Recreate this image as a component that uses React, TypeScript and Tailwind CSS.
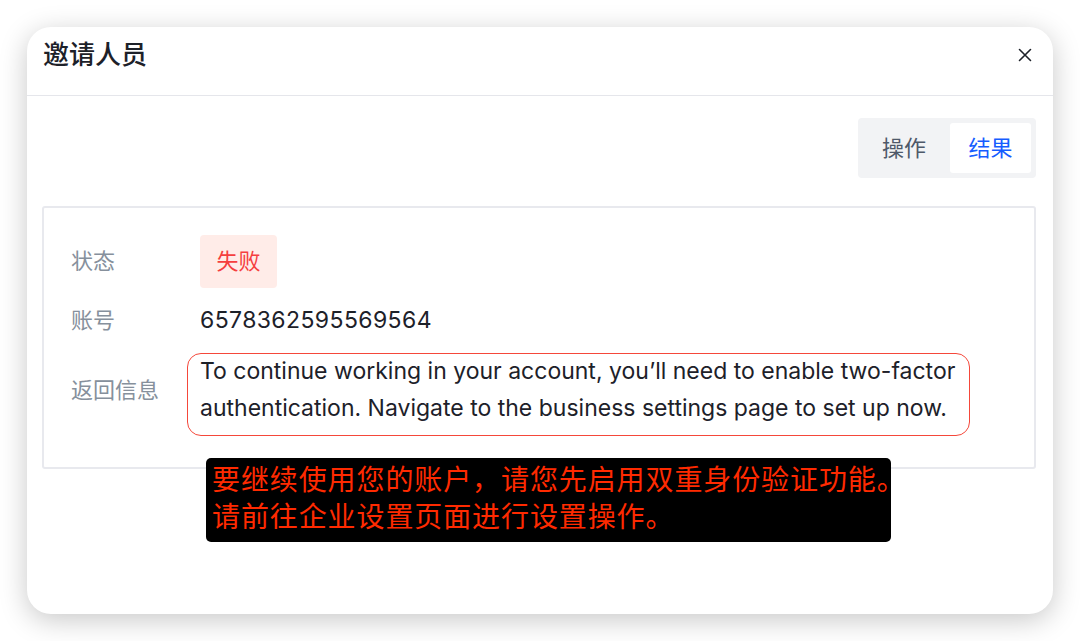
import React from 'react';

const App = () => {
  return (
    <div className="w-[1080px] h-[641px] bg-white p-[27px] font-['Inter','Noto_Sans_CJK_SC',sans-serif]">
      <div className="relative h-[587px] rounded-[24px] bg-white shadow-[0_6px_28px_rgba(0,0,0,0.22)] flex flex-col">
        {/* Header */}
        <div className="h-[69px] flex items-center justify-between pl-[16px] pr-[21px] pb-[12px] border-b border-[#e5e6eb]">
          <h2 className="text-[26px] leading-none font-medium text-[#1d2129]">邀请人员</h2>
          <svg width="14" height="14" viewBox="0 0 14 14" className="text-[#1d2129]">
            <path d="M1.5 1.5 L12.5 12.5 M12.5 1.5 L1.5 12.5" stroke="currentColor" strokeWidth="1.6" strokeLinecap="round" />
          </svg>
        </div>

        {/* Body */}
        <div className="pt-[22px] pl-[15px] pr-[17px]">
          <div className="flex justify-end">
            <div className="flex gap-[5px] p-[5px] rounded-[4px] bg-[#f2f3f5]">
              <div className="w-[82px] h-[50px] flex items-center justify-center text-[22px] text-[#4e5969]">操作</div>
              <div className="w-[81px] h-[50px] flex items-center justify-center text-[22px] text-[#165dff] bg-white rounded-[3px]">结果</div>
            </div>
          </div>

          {/* Result box */}
          <div className="mt-[28px] border-2 border-[#e8e9ee] rounded-[3px] pl-[27px] pt-[27px] pb-[40px]">
            <div className="grid grid-cols-[129px_1fr] items-center gap-y-[14px] text-[22px]">
              <div className="text-[#86909c]">状态</div>
              <div>
                <span className="inline-flex items-center justify-center w-[77px] h-[53px] rounded-[4px] bg-[#ffece8] text-[#f53f3f]">失败</span>
              </div>

              <div className="text-[#86909c] leading-[37px]">账号</div>
              <div className="text-[#1d2129] text-[23px] tracking-[0.4px] leading-[37px]">6578362595569564</div>

              <div className="text-[#86909c]">返回信息</div>
              <div className="relative text-[#1d2129] text-[23px] leading-[37px] whitespace-nowrap">
                To continue working in your account, you’ll need to enable two-factor
                <br />
                authentication. Navigate to the business settings page to set up now.
                <span className="absolute -left-[13px] top-0 w-[783px] h-[83px] rounded-[14px] border-[1.5px] border-[#f5473a]" />
              </div>
            </div>
          </div>
        </div>

        {/* Annotation overlay */}
        <div className="absolute left-[179px] top-[431px] w-[685px] h-[84px] rounded-[5px] bg-black pl-[6px] pt-[4px] text-[28px] leading-[37px] tracking-[0.9px] text-[#ff2a00]">
          <div className="whitespace-nowrap">要继续使用您的账户，请您先启用双重身份验证功能。</div>
          <div className="whitespace-nowrap">请前往企业设置页面进行设置操作。</div>
        </div>
      </div>
    </div>
  );
};

export default App;
